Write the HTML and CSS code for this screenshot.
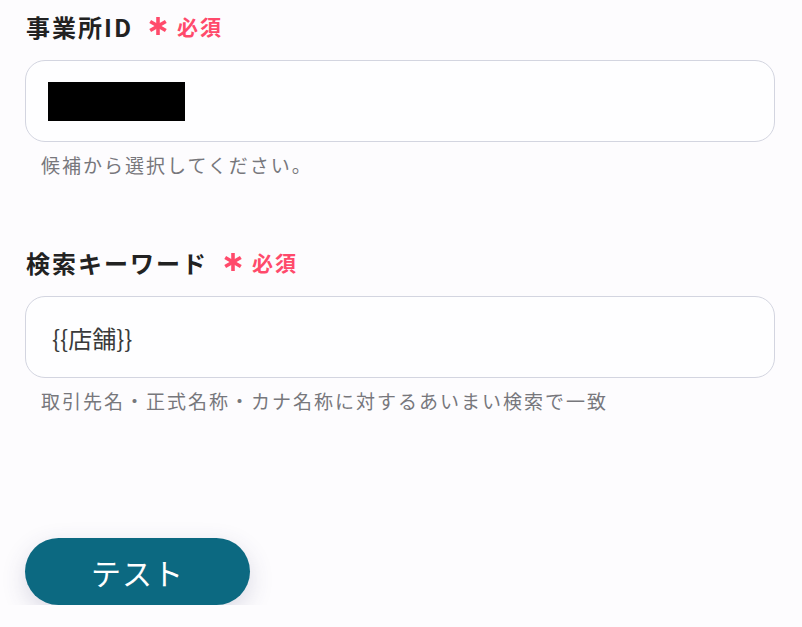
FILE: index.html
```html
<!DOCTYPE html>
<html lang="ja">
<head>
  <meta charset="UTF-8">
  <meta name="viewport" content="width=device-width, initial-scale=1.0">
  <title>事業所ID 設定</title>
  <link rel="stylesheet" href="styles.css">
</head>
<body>

  <div id="formulaire">
    <div class="champ">
      <div class="libelle">
        <span class="libelleTexte">事業所ID</span>
        <span class="requis">
          <svg class="asterisque" viewBox="0 0 20 20" width="20" height="20">
            <line x1="10" y1="1" x2="10" y2="19"/>
            <line x1="2.2" y1="5.5" x2="17.8" y2="14.5"/>
            <line x1="2.2" y1="14.5" x2="17.8" y2="5.5"/>
          </svg>
          必須
        </span>
      </div>
      <div class="boite">
        <span class="masque"></span>
      </div>
      <p class="aide">候補から選択してください。</p>
    </div>

    <div class="champ">
      <div class="libelle">
        <span class="libelleTexte">検索キーワード</span>
        <span class="requis">
          <svg class="asterisque" viewBox="0 0 20 20" width="20" height="20">
            <line x1="10" y1="1" x2="10" y2="19"/>
            <line x1="2.2" y1="5.5" x2="17.8" y2="14.5"/>
            <line x1="2.2" y1="14.5" x2="17.8" y2="5.5"/>
          </svg>
          必須
        </span>
      </div>
      <div class="boite">
        <span class="valeur">{{店舗}}</span>
      </div>
      <p class="aide">取引先名・正式名称・カナ名称に対するあいまい検索で一致</p>
    </div>

    <button id="boutonTest" type="button">テスト</button>
  </div>

</body>
</html>
```

FILE: styles.css
```css
body {
  background-color: #fdfcfe;
  color: #222222;
  font-family: "Noto Sans CJK JP", "Noto Sans", sans-serif;
  margin: 0;
  padding: 0;
}

#formulaire {
  width: 750px;
  padding: 8px 0 0 25px;
}

.champ + .champ {
  margin-top: 64px;
}

.libelle {
  display: flex;
  align-items: center;
  height: 36px;
  margin-left: 1px;
}

.libelleTexte {
  font-size: 24px;
  font-weight: bold;
  letter-spacing: 2px;
  color: #222222;
}

.requis {
  display: flex;
  align-items: center;
  gap: 9px;
  margin-left: 15px;
  color: #ff4a6b;
  font-size: 21px;
  font-weight: bold;
  letter-spacing: 2px;
}

.asterisque {
  stroke: #ff4a6b;
  stroke-width: 3.6;
}

.boite {
  display: flex;
  align-items: center;
  box-sizing: border-box;
  height: 82px;
  margin-top: 16px;
  padding: 0 22px;
  background-color: #fefeff;
  border: 1px solid #d3d5e0;
  border-radius: 20px;
}

.masque {
  display: block;
  width: 137px;
  height: 39px;
  background-color: #000000;
}

.valeur {
  padding-left: 4px;
  font-size: 24px;
  color: #3a3a3a;
}

.aide {
  margin: 8px 0 0 16px;
  line-height: 30px;
  font-size: 19px;
  letter-spacing: 2px;
  color: #77777c;
}

#boutonTest {
  display: block;
  width: 225px;
  height: 67px;
  margin-top: 122px;
  background-color: #0c6981;
  color: #ffffff;
  border: none;
  border-radius: 34px;
  font-family: inherit;
  font-size: 30px;
  letter-spacing: 1px;
  box-shadow: 0 8px 24px rgba(60, 60, 110, 0.18);
  cursor: pointer;
}
```
